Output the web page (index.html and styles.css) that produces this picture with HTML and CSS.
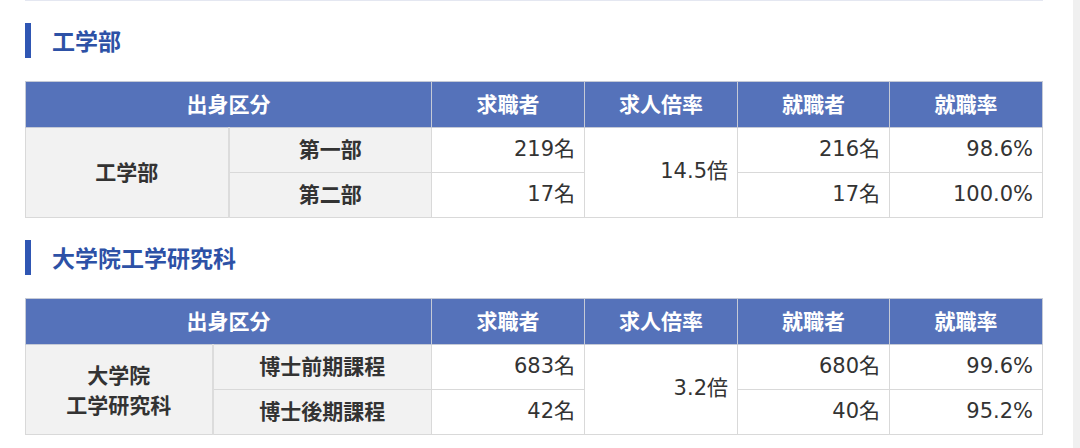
FILE: index.html
```html
<!DOCTYPE html>
<html lang="ja">
<head>
<meta charset="utf-8">
<title>就職状況</title>
<link rel="stylesheet" href="styles.css">
</head>
<body>
<div class="page">
  <main class="main">
    <div class="rule"></div>

    <h2 class="heading">工学部</h2>
    <table class="stats">
      <colgroup>
        <col class="c-a1"><col class="c-b1"><col class="c-n"><col class="c-n"><col class="c-n2"><col class="c-n">
      </colgroup>
      <thead>
        <tr>
          <th colspan="2">出身区分</th>
          <th>求職者</th>
          <th>求人倍率</th>
          <th>就職者</th>
          <th>就職率</th>
        </tr>
      </thead>
      <tbody>
        <tr>
          <th class="group" rowspan="2">工学部</th>
          <th class="sub">第一部</th>
          <td>219名</td>
          <td rowspan="2">14.5倍</td>
          <td>216名</td>
          <td>98.6%</td>
        </tr>
        <tr>
          <th class="sub">第二部</th>
          <td>17名</td>
          <td>17名</td>
          <td>100.0%</td>
        </tr>
      </tbody>
    </table>

    <h2 class="heading">大学院工学研究科</h2>
    <table class="stats">
      <colgroup>
        <col class="c-a2"><col class="c-b2"><col class="c-n"><col class="c-n"><col class="c-n2"><col class="c-n">
      </colgroup>
      <thead>
        <tr>
          <th colspan="2">出身区分</th>
          <th>求職者</th>
          <th>求人倍率</th>
          <th>就職者</th>
          <th>就職率</th>
        </tr>
      </thead>
      <tbody>
        <tr>
          <th class="group two" rowspan="2">大学院<br>工学研究科</th>
          <th class="sub">博士前期課程</th>
          <td>683名</td>
          <td rowspan="2">3.2倍</td>
          <td>680名</td>
          <td>99.6%</td>
        </tr>
        <tr>
          <th class="sub">博士後期課程</th>
          <td>42名</td>
          <td>40名</td>
          <td>95.2%</td>
        </tr>
      </tbody>
    </table>
  </main>
  <div class="side"></div>
</div>
</body>
</html>
```

FILE: styles.css
```css
html, body {
  margin: 0;
  padding: 0;
  background: #ffffff;
}

body {
  font-family: "DejaVu Sans", "Noto Sans CJK JP", sans-serif;
  color: #333333;
}

.page {
  display: flex;
  width: 1080px;
  height: 448px;
  overflow: hidden;
}

.main {
  flex: 1;
  padding: 0 30px 0 25px;
}

.side {
  width: 8px;
  background: #f0f0f0;
}

.rule {
  border-top: 1px solid #e4e7f1;
}

.heading {
  margin: 22px 0 23px 0;
  height: 35px;
  line-height: 35px;
  border-left: 6px solid #2f56b3;
  padding-left: 21px;
  font-family: "Noto Sans CJK JP", sans-serif;
  font-size: 23px;
  font-weight: bold;
  color: #2d51a6;
}

.stats {
  width: 1017px;
  table-layout: fixed;
  border-collapse: collapse;
  font-size: 21px;
}

.c-a1 { width: 203px; }
.c-b1 { width: 203px; }
.c-a2 { width: 187px; }
.c-b2 { width: 219px; }
.c-n  { width: 153px; }
.c-n2 { width: 152px; }

.stats th,
.stats td {
  border: 1px solid #d9d9d9;
  padding: 0 9px;
  line-height: 1.2;
}

.stats thead tr {
  height: 46px;
}

.stats thead th {
  background: #5572ba;
  color: #ffffff;
  font-family: "Noto Sans CJK JP", sans-serif;
  font-weight: bold;
  font-size: 21px;
  text-align: center;
  border-color: #c5cad6;
  padding-bottom: 2px;
}

.stats tbody tr {
  height: 45px;
}

.stats tbody th {
  background: #f2f2f2;
  font-family: "Noto Sans CJK JP", sans-serif;
  font-weight: bold;
  font-size: 21px;
  color: #333333;
  text-align: center;
  padding-bottom: 2px;
}

.stats .group {
  border-right: 2px solid #dcdcdc;
}

.stats .two {
  line-height: 30px;
}

.stats td {
  text-align: right;
  background: #ffffff;
  padding-bottom: 1px;
}
```
